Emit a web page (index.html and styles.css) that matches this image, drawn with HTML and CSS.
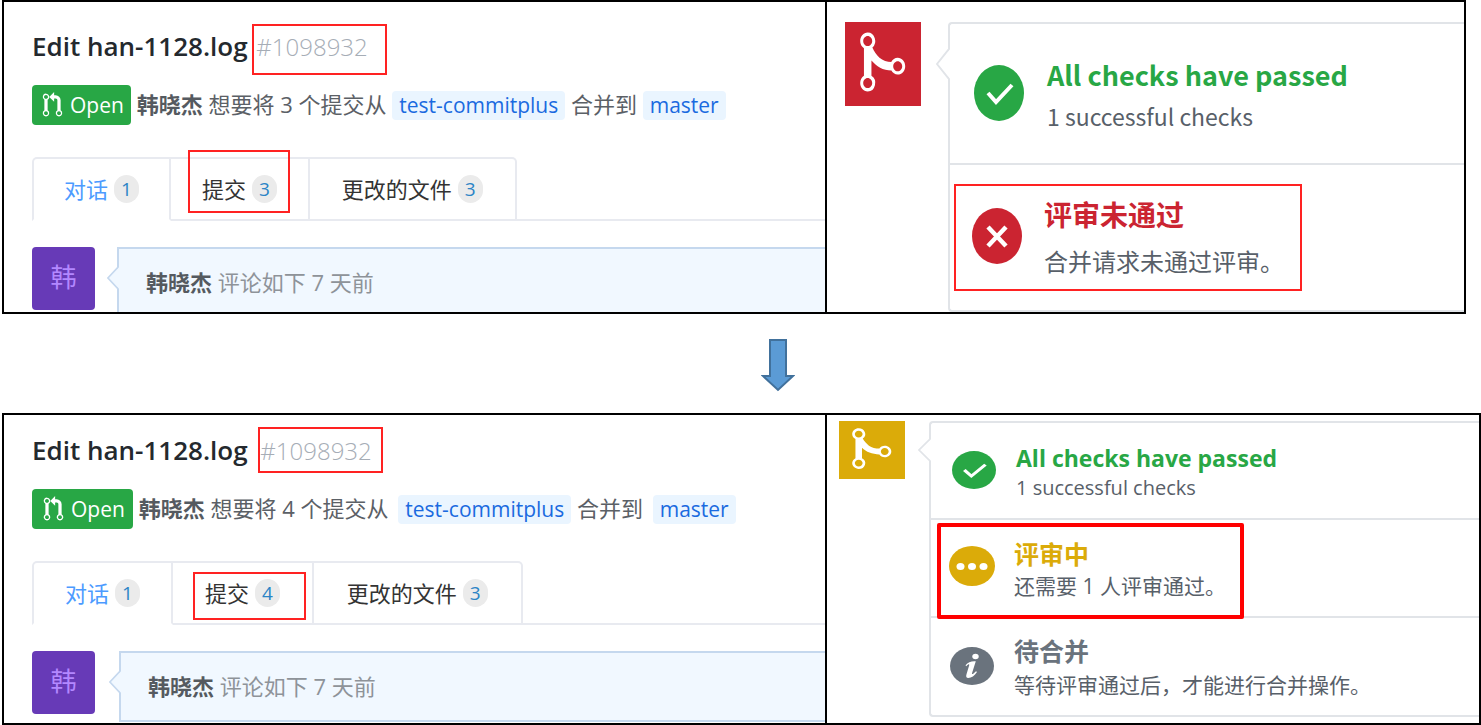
FILE: index.html
```html
<!DOCTYPE html>
<html lang="zh-CN">
<head>
<meta charset="utf-8">
<title>Edit han-1128.log</title>
<link rel="stylesheet" href="styles.css">
</head>
<body>
<svg class="sprite" aria-hidden="true">
  <symbol id="pull" viewBox="0 0 12 16"><path d="M11 11.28V5c-.03-.78-.34-1.47-.94-2.06C9.46 2.35 8.78 2.03 8 2H7V0L4 3l3 3V4h1c.27.02.48.11.69.31.21.2.3.42.31.69v6.28A1.993 1.993 0 0 0 10 15a1.993 1.993 0 0 0 1-3.72zm-1 2.92c-.66 0-1.2-.55-1.2-1.2 0-.65.55-1.2 1.2-1.2.65 0 1.2.55 1.2 1.2 0 .65-.55 1.2-1.2 1.2zM4 3c0-1.11-.89-2-2-2a1.993 1.993 0 0 0-1 3.72v6.56A1.993 1.993 0 0 0 2 15a1.993 1.993 0 0 0 1-3.72V4.72c.59-.34 1-.98 1-1.72zm-.8 10c0 .66-.55 1.2-1.2 1.2-.65 0-1.2-.55-1.2-1.2 0-.65.55-1.2 1.2-1.2.65 0 1.2.55 1.2 1.2zM2 4.2C1.34 4.2.8 3.65.8 3c0-.65.55-1.2 1.2-1.2.65 0 1.2.55 1.2 1.2 0 .65-.55 1.2-1.2 1.2z"/></symbol>
  <symbol id="merge" viewBox="0 0 76 84" preserveAspectRatio="none"><path transform="translate(15.2 6.4) scale(3.75 4.2)" d="M10 7c-.73 0-1.38.41-1.73 1.02V8C7.22 7.98 6 7.64 5.14 6.98c-.75-.58-1.5-1.61-1.89-2.44A1.993 1.993 0 0 0 2 .99C.89.99 0 1.89 0 3a2 2 0 0 0 1 1.72v6.56c-.59.35-1 .99-1 1.72 0 1.11.89 2 2 2a1.993 1.993 0 0 0 1-3.72V7.67c.67.7 1.44 1.27 2.3 1.69.86.42 2.03.63 2.97.64v-.02c.36.61 1 1.02 1.73 1.02 1.11 0 2-.89 2-2 0-1.11-.89-2-2-2zm-6.8 6c0 .66-.55 1.2-1.2 1.2-.65 0-1.2-.55-1.2-1.2 0-.65.55-1.2 1.2-1.2.65 0 1.2.55 1.2 1.2zM2 4.2C1.34 4.2.8 3.65.8 3c0-.65.55-1.2 1.2-1.2.65 0 1.2.55 1.2 1.2 0 .65-.55 1.2-1.2 1.2zm8 6c-.66 0-1.2-.55-1.2-1.2 0-.65.55-1.2 1.2-1.2.65 0 1.2.55 1.2 1.2 0 .65-.55 1.2-1.2 1.2z"/></symbol>
  <symbol id="ok" viewBox="0 0 50 56" preserveAspectRatio="none"><ellipse cx="25" cy="28" rx="25" ry="28" fill="#28a745"/><path d="M14 28l8 9 16-17" fill="none" stroke="#fff" stroke-width="4"/></symbol>
  <symbol id="fail" viewBox="0 0 50 56" preserveAspectRatio="none"><ellipse cx="25" cy="28" rx="25" ry="28" fill="#cb2431"/><path d="M16 19l18 19M34 19L16 38" fill="none" stroke="#fff" stroke-width="4.5"/></symbol>
  <symbol id="wait" viewBox="0 0 46 40" preserveAspectRatio="none"><ellipse cx="23" cy="20" rx="23" ry="20" fill="#dbab09"/><g fill="#fff"><ellipse cx="11.500" cy="20.500" rx="4" ry="3.500"/><ellipse cx="23" cy="20.500" rx="4" ry="3.500"/><ellipse cx="34.500" cy="20.500" rx="4" ry="3.500"/></g></symbol>
  <symbol id="info" viewBox="0 0 44 38" preserveAspectRatio="none"><ellipse cx="22" cy="19" rx="22" ry="19" fill="#6a737d"/><g fill="#fff"><ellipse cx="25.500" cy="9.500" rx="3.200" ry="2.800"/><path d="M15.500 18.200C18 15 21.500 13.800 25.800 14.200L22 26.300C21.700 27.600 22.800 27.300 26 24.200L27 25C24.500 28.800 21.500 31 18.300 31C16.200 31 15.800 29.600 16.500 27.300L19.200 18.300C19.500 16.800 18.500 17 16.300 19.200Z"/></g></symbol>
  <symbol id="caret" viewBox="0 0 14 30" preserveAspectRatio="none"><path d="M14 0L1 15L14 30Z"/><path class="caret-line" d="M13 0L1 15L13 30" fill="none" stroke-width="2"/></symbol>
</svg>
<main>
  <section class="state before">
    <div class="pull">
      <h1>Edit han-1128.log <span class="number">#1098932<i class="mark"></i></span></h1>
      <div class="meta">
        <span class="badge"><svg><use href="#pull"/></svg>Open</span>
        <p><b>韩晓杰</b> 想要将 3 个提交从 <a class="branch" href="#b">test-commitplus</a> 合并到 <a class="branch" href="#m">master</a></p>
      </div>
      <nav class="tabs">
        <a class="active" href="#c">对话<span>1</span></a>
        <a href="#d">提交<span>3</span><i class="mark"></i></a>
        <a href="#e">更改的文件<span>3</span></a>
      </nav>
      <div class="comment">
        <div class="avatar">韩</div>
        <svg class="caret"><use href="#caret"/></svg>
        <div class="bubble"><b>韩晓杰</b> 评论如下 7 天前</div>
      </div>
    </div>
    <div class="merge">
      <svg class="tile"><use href="#merge"/></svg>
      <svg class="caret"><use href="#caret"/></svg>
      <ul class="checks">
        <li><svg><use href="#ok"/></svg><div><h2 class="green">All checks have passed</h2><p>1 successful checks</p></div></li>
        <li><svg><use href="#fail"/></svg><div><h2 class="red">评审未通过</h2><p>合并请求未通过评审。</p></div><i class="mark"></i></li>
      </ul>
    </div>
  </section>

  <svg class="arrow" viewBox="0 0 34 53"><path d="M9 1H25V37H32L17 51L2 37H9Z"/></svg>

  <section class="state after">
    <div class="pull">
      <h1>Edit han-1128.log <span class="number">#1098932<i class="mark"></i></span></h1>
      <div class="meta">
        <span class="badge"><svg><use href="#pull"/></svg>Open</span>
        <p><b>韩晓杰</b> 想要将 4 个提交从 <a class="branch" href="#b">test-commitplus</a> 合并到 <a class="branch" href="#m">master</a></p>
      </div>
      <nav class="tabs">
        <a class="active" href="#c">对话<span>1</span></a>
        <a href="#d">提交<span>4</span><i class="mark"></i></a>
        <a href="#e">更改的文件<span>3</span></a>
      </nav>
      <div class="comment">
        <div class="avatar">韩</div>
        <svg class="caret"><use href="#caret"/></svg>
        <div class="bubble"><b>韩晓杰</b> 评论如下 7 天前</div>
      </div>
    </div>
    <div class="merge">
      <svg class="tile"><use href="#merge"/></svg>
      <svg class="caret"><use href="#caret"/></svg>
      <ul class="checks">
        <li><svg><use href="#ok"/></svg><div><h2 class="green">All checks have passed</h2><p>1 successful checks</p></div></li>
        <li><svg class="wait"><use href="#wait"/></svg><div><h2 class="yellow">评审中</h2><p>还需要 1 人评审通过。</p></div><i class="mark"></i></li>
        <li><svg><use href="#info"/></svg><div><h2 class="gray">待合并</h2><p>等待评审通过后，才能进行合并操作。</p></div></li>
      </ul>
    </div>
  </section>
</main>
</body>
</html>
```
FILE: styles.css
```css
* { box-sizing: border-box; }
body {
  margin: 0;
  background: #fff;
  color: #24292e;
  font: 22px/32px "Open Sans", "Noto Sans CJK SC", sans-serif;
}
h1, h2, p, ul { margin: 0; padding: 0; }
a { color: inherit; text-decoration: none; }
.sprite { position: absolute; width: 0; height: 0; }

.state {
  display: grid;
  margin-left: 2px;
  border: 2px solid #000;
}
.before { grid-template-columns: 823fr 637fr; margin-right: 15px; }
.after { grid-template-columns: 823fr 652fr; border-bottom-width: 3px; }

/* Highlight frame drawn over an item */
.mark { position: absolute; z-index: 1; border: 2px solid #f22; pointer-events: none; }

/* Pull request header */
.pull {
  display: flex;
  flex-direction: column;
  min-width: 0;
  padding: 24px 0 0 28px;
  border-right: 2px solid #000;
}
.after .pull { padding: 15px 0 1px 28px; }
h1 { font-size: 26px; line-height: 40px; font-weight: 600; white-space: nowrap; }
.number { position: relative; margin-left: 2px; color: #a6adb6; font-size: 24px; font-weight: 300; }
.number .mark { inset: -6px -19px -12px -4px; }
.after .number { margin-left: 6px; }
.after .number .mark { inset: -7px -11px -6px -2px; }

.meta { display: flex; gap: 6px; margin-top: 18px; color: #5b6066; white-space: nowrap; }
.meta p { line-height: 38px; }
.badge {
  display: flex;
  align-items: center;
  gap: 7px;
  height: 40px;
  padding: 0 7px 0 10px;
  border-radius: 4px;
  background: #28a745;
  color: #fff;
  font-size: 21px;
}
.after .badge { padding: 0 8px 0 11px; }
.badge svg { width: 21px; height: 26px; fill: #fff; }
.branch {
  display: inline-block;
  padding: 0 7px;
  border-radius: 4px;
  background: #eaf5ff;
  color: #1a6ae0;
  font-size: 21px;
  line-height: 29px;
}
.after .branch { margin-left: 4px; }

.tabs { display: flex; margin-top: 32px; color: #333; }
.tabs::after { content: ""; flex: 1; border-bottom: 2px solid #e8eaf0; }
.tabs a {
  position: relative;
  display: flex;
  align-items: center;
  gap: 6px;
  height: 64px;
  padding: 0 31px;
  border: 2px solid #e8eaf0;
  border-left-width: 0;
}
.after .tabs a { padding: 0 32px; }
.tabs .active, .after .tabs .active {
  padding: 0 30px;
  border-left-width: 2px;
  border-bottom-color: transparent;
  border-top-left-radius: 5px;
  color: #4c9bff;
}
.after .tabs .active { padding: 0 31px; }
.tabs a:last-child { padding: 0 32px; border-top-right-radius: 5px; }
.after .tabs a:last-child { padding: 0 33px; }
.tabs span {
  padding: 0 7px;
  border-radius: 14px;
  background: #ebebeb;
  color: #2b84c6;
  font-size: 19px;
  line-height: 28px;
}
.tabs .mark { inset: -9px 18px 6px 17px; }
.after .tabs .mark { inset: 9px 6px 3px 20px; }

.comment { display: flex; flex: 1; margin-top: 26px; }
.avatar {
  width: 63px;
  height: 63px;
  border-radius: 4px;
  background: #673ab7;
  color: #b388ff;
  font-size: 26px;
  line-height: 60px;
  text-align: center;
}
.caret { position: relative; z-index: 1; flex: none; overflow: visible; }
.comment .caret { --line: #c5d8ee; width: 12px; height: 22px; margin: 20px -2px 0 12px; fill: #f1f8ff; }
.after .comment .caret { margin-left: 14px; }
.caret-line { stroke: var(--line); }
.bubble {
  flex: 1;
  height: 65px;
  padding: 17px 27px 0;
  border: 2px solid #c5d8ee;
  border-width: 2px 0 0 2px;
  background: #f1f8ff;
  color: #8e9399;
}
.bubble b, .meta b { color: #555a60; }
.after .bubble { height: 71px; border-bottom-width: 2px; }

/* Merge status */
.merge { display: flex; align-items: flex-start; min-width: 0; padding: 20px 0 0 18px; }
.tile { flex: none; width: 76px; height: 84px; background: #cb2431; fill: #fff; }
.merge .caret { --line: #e1e4e8; width: 14px; height: 30px; margin: 27px -2px 0 15px; fill: #fff; }
.checks {
  flex: 1;
  border: 2px solid #e1e4e8;
  border-right: 0;
  border-radius: 4px 0 0 4px;
  list-style: none;
  color: #586069;
}
.checks li { position: relative; display: flex; gap: 23px; padding: 29px 24px 26px; }
.checks li + li { border-top: 2px solid #e1e4e8; }
.checks li svg { flex: none; width: 50px; height: 56px; margin-top: 12px; }
.checks h2 { font: bold 27px/43px "Noto Sans CJK SC", sans-serif; }
.checks p { font: 23px/41px "Noto Sans CJK SC", sans-serif; }
.before li + li { gap: 22px; padding: 29px 22px 24px; }
.before li + li svg { margin-top: 14px; }
.before li + li h2 { font-size: 28px; line-height: 41px; }
.before li + li p { font-size: 24px; line-height: 51px; }
.before li .mark { inset: 19px 162px 19px 4px; }
.green { color: #28a745; }
.red { color: #cb2431; }
.yellow { color: #dbab09; }
.gray { color: #6a737d; }

.after .merge { padding: 6px 0 0 12px; }
.after .tile { width: 66px; height: 58px; background: #dbab09; }
.after .merge .caret { width: 13px; height: 22px; margin: 18px -2px 0 13px; }
.after .checks li { gap: 20px; padding: 20px 21px 15px; }
.after .checks li svg { width: 44px; height: 38px; margin-top: 8px; }
.after .checks h2 { font: bold 23px/30px "Open Sans", "Noto Sans CJK SC", sans-serif; }
.after .checks p { font: 20px/30px "Open Sans", "Noto Sans CJK SC", sans-serif; }
.after .checks li + li { gap: 19px; padding: 18px 18px 14px; }
.after .checks li .wait { width: 46px; height: 40px; }
.after .checks li + li h2 { font-size: 25px; line-height: 32px; }
.after .checks li + li p { font-size: 21px; line-height: 32px; }
.after .checks li:last-child { gap: 20px; padding: 17px 19px 12px; }
.after .checks li:last-child svg { margin-top: 12px; }
.after .checks li:last-child p { line-height: 36px; }
.after .checks .mark { inset: 3px 235px -3px 6px; border: 4px solid #f00; border-radius: 2px; }

.arrow { display: block; width: 34px; height: 53px; margin: 25px 0 21px 761px; fill: #5b9bd5; stroke: #41719c; stroke-width: 2px; }
```
